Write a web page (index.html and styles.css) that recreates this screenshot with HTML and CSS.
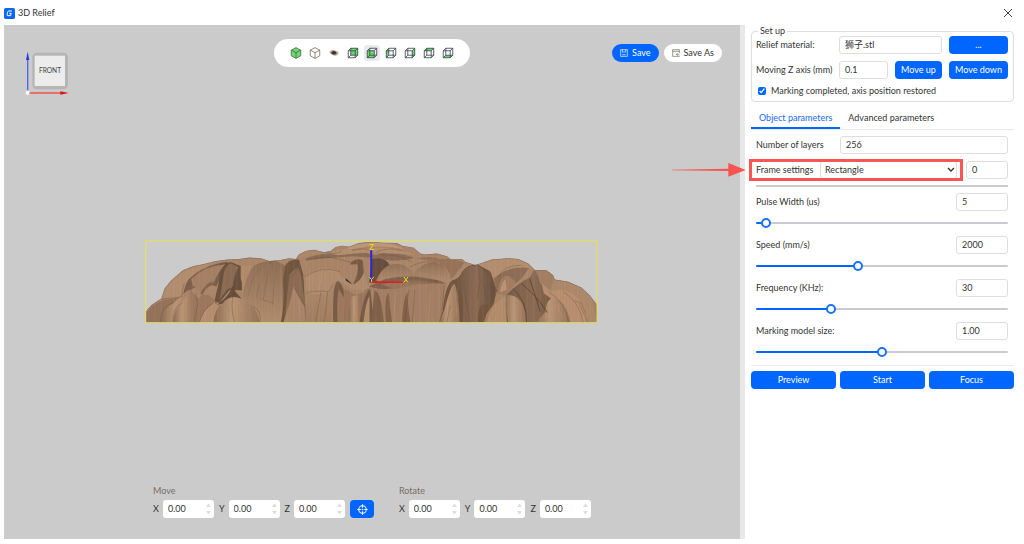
FILE: index.html
```html
<!DOCTYPE html>
<html lang="en">
<head>
<meta charset="utf-8">
<meta name="viewport" content="width=device-width, initial-scale=1">
<title>3D Relief</title>
<link rel="stylesheet" href="styles.css">
</head>
<body>
<svg class="defs" aria-hidden="true">
  <defs>
    <g id="wire" fill="none" stroke="#3b4251" stroke-width="1.3" stroke-linejoin="round">
      <path d="M2 6H13V17H2ZM6 2H17V13H6ZM2 6L6 2M13 6L17 2M13 17L17 13M2 17L6 13"/>
    </g>
    <g id="steps" fill="#dcdcdc"><path d="M0 4L3 0L6 4ZM0 9L3 13L6 9Z"/></g>
  </defs>
</svg>
<div class="app">
  <header class="titlebar">
    <svg class="logo" viewBox="0 0 33 33" aria-hidden="true"><rect width="33" height="33" rx="5" fill="#0a66f5"/><path d="M24 9H14Q11 9 10.500 13L9.500 20Q9 23 12 23H20L21.500 16H16" fill="none" stroke="#fff" stroke-width="3"/></svg>
    <h1 class="title">3D Relief</h1>
    <button class="close" type="button" aria-label="Close"><svg viewBox="0 0 10 10"><path d="M1 1L9 9M9 1L1 9" stroke="#444" stroke-width="1" fill="none"/></svg></button>
  </header>
  <main class="main">
    <section class="stage" aria-label="Viewport">
      <svg class="viewcube" viewBox="0 0 132 135" aria-label="Front view">
        <rect x="22" y="5" width="107" height="110" rx="14" fill="#b5b5b5"/>
        <rect x="29" y="14" width="91" height="91" fill="#ececec"/>
        <text x="75" y="65" text-anchor="middle" class="cube-text">FRONT</text>
        <path d="M8 118V20" stroke="#4a66e0" stroke-width="4"/><path d="M8 2L13 27H3Z" fill="#263bd0"/>
        <path d="M10 126H112" stroke="#f05050" stroke-width="4"/><path d="M131 126L106 121V131Z" fill="#d81818"/>
        <circle cx="8" cy="125" r="6" fill="#fff"/>
      </svg>
      <div class="toolbar">
        <button type="button" aria-label="Solid"><svg viewBox="0 0 19 19"><path d="M9.500 1L17 5V14L9.500 18L2 14V5Z" fill="#6fd672" stroke="#476b49" stroke-width="1.300"/><path d="M2 5L9.500 9L17 5M9.500 9V18" fill="none" stroke="#476b49" stroke-width="1.300"/></svg></button>
        <button type="button" aria-label="Wireframe"><svg viewBox="0 0 19 19"><path d="M9.500 1L17 5V14L9.500 18L2 14V5ZM2 5L9.500 9L17 5M9.500 9V18" fill="#fff" stroke="#77604f" stroke-width="1.200"/></svg></button>
        <button type="button" aria-label="Relief"><svg viewBox="0 0 19 19"><path d="M2 8Q5 4 10 5L16 8Q18 12 12 14Q6 14 2 8Z" fill="#b5a697"/><path d="M5 9Q8 4 13 8Q14 12 10 12Q6 12 5 9Z" fill="#40352e"/></svg></button>
        <button type="button" aria-label="Back"><svg viewBox="0 0 19 19"><path d="M6 2H17V13H6Z" fill="#65dc69"/><use href="#wire"/></svg></button>
        <button class="active" type="button" aria-label="Front"><svg viewBox="0 0 19 19"><path d="M2 6H13V17H2Z" fill="#65dc69"/><use href="#wire"/></svg></button>
        <button type="button" aria-label="Left"><svg viewBox="0 0 19 19"><path d="M2 6L6 2V13L2 17Z" fill="#65dc69"/><use href="#wire"/></svg></button>
        <button type="button" aria-label="Right"><svg viewBox="0 0 19 19"><path d="M13 6L17 2V13L13 17Z" fill="#65dc69"/><use href="#wire"/></svg></button>
        <button type="button" aria-label="Top"><svg viewBox="0 0 19 19"><path d="M2 6L6 2H17L13 6Z" fill="#65dc69"/><use href="#wire"/></svg></button>
        <button type="button" aria-label="Bottom"><svg viewBox="0 0 19 19"><path d="M2 17L6 13H17L13 17Z" fill="#65dc69"/><use href="#wire"/></svg></button>
      </div>
      <div class="file-actions">
        <button class="pill primary" type="button"><svg viewBox="0 0 24 24" fill="none" stroke="currentColor" stroke-width="2"><path d="M2 2H22V22H2ZM7 2V9H17V2M7 17H17"/></svg>Save</button>
        <button class="pill" type="button"><svg viewBox="0 0 24 24" fill="none" stroke="#6e6259" stroke-width="2"><path d="M22 12V2H2V22H22V20M2 7H22M14 16H22M17 12L13 16L17 20"/></svg>Save As</button>
      </div>
      <svg class="relief" viewBox="16 29 1365 252" role="img" aria-label="Relief model">
        <defs>
          <linearGradient id="base" x1="0" y1="0" x2="0" y2="1"><stop offset="0" stop-color="#a98468"/><stop offset=".55" stop-color="#ac886b"/><stop offset="1" stop-color="#a37e61"/></linearGradient>
          <linearGradient id="lit" x1="0" y1="0" x2="1" y2="0"><stop offset="0" stop-color="#8b6b54"/><stop offset=".4" stop-color="#bb9575"/><stop offset="1" stop-color="#947158"/></linearGradient>
          <linearGradient id="dark" x1="0" y1="0" x2="1" y2="0"><stop offset="0" stop-color="#765a47"/><stop offset=".5" stop-color="#8b6b54"/><stop offset="1" stop-color="#65503f"/></linearGradient>
          <linearGradient id="dome" x1="0" y1="0" x2="0" y2="1"><stop offset="0" stop-color="#8f6f57"/><stop offset="1" stop-color="#b18c6e"/></linearGradient>
          <pattern id="grain" width="19" height="260" patternUnits="userSpaceOnUse"><path d="M2 0L3 260M14 0L12 260" stroke="#6f533f" stroke-opacity=".14" stroke-width="1.500"/><path d="M8 0V260" stroke="#c9a182" stroke-opacity=".18" stroke-width="2"/></pattern>
          <clipPath id="outline"><path id="sil" d="M18 278V245L35 225L65 205L75 175L95 150L130 120L160 108L190 102L230 92L265 88L300 86L330 82L365 84L390 92L420 90L450 84L470 86L480 72L500 62L525 58L555 66L575 62L590 50L610 46L630 49L660 38L700 34L730 37L775 38L790 46L825 52L845 70L860 73L895 70L925 78L938 88L970 86L982 95L1010 104L1030 98L1060 88L1110 84L1140 86L1170 100L1190 119L1225 120L1245 135L1250 148L1290 155L1330 172L1355 195L1377 224V278Z"/></clipPath>
        </defs>
        <g clip-path="url(#outline)">
          <rect x="16" y="29" width="1365" height="252" fill="url(#base)"/>
          <path d="M65 205Q85 160 125 130Q165 103 220 98L155 145L125 235L100 205Z" fill="#b38d6f"/>
          <path d="M126 235Q132 160 150 145Q190 103 265 95L250 130L230 170Q210 155 188 195L170 170L145 185Z" fill="url(#dark)"/>
          <path d="M155 147Q195 107 258 102Q232 130 224 158Q205 150 182 190Q170 170 160 167Z" fill="#a58064"/>
          <path d="M225 215Q238 155 246 120Q255 98 274 95L306 108L308 180L270 180L240 218Z" fill="#68503e"/>
          <path d="M253 130Q260 100 276 100L298 110Q284 130 279 177Q265 165 240 213Z" fill="#8c6a52"/>
          <path d="M304 108L338 106Q322 130 315 178L304 145Z" fill="#b28b6c"/>
          <path d="M310 200Q315 145 345 105Q400 78 440 107L433 278H360Q350 230 310 200Z" fill="url(#dome)"/>
          <path d="M327 196Q335 140 362 115M410 110L400 225M360 205Q380 212 403 220M350 205L360 165M389 115L372 208" fill="none" stroke="#775a45" stroke-width="2" opacity=".45"/>
          <path d="M437 110Q445 86 480 88L493 135L500 278H424Q437 230 432 150Z" fill="#71563f"/>
          <path d="M450 135Q463 118 477 112Q487 132 492 180Q500 220 502 278H434Q445 200 450 135Z" fill="#8b6b52"/>
          <path d="M463 168Q480 203 496 231L500 278H432Q450 230 463 168Z" fill="#aa8468"/>
          <path d="M470 86Q500 48 552 67L545 77Q500 80 470 86Z" fill="#ac876b"/>
          <path d="M493 139Q500 88 555 83Q620 68 704 92L700 278H590L583 200L560 180L500 190Z" fill="#a98468"/>
          <path d="M497 140Q540 107 590 116L623 155L643 158Q663 145 670 118L690 172L675 180L640 178L610 157L590 153L570 190L505 193Z" fill="#b18b6e"/>
          <path d="M500 84Q550 66 590 72Q650 55 710 75L735 66Q770 64 826 82Q800 93 750 90L690 82L640 78Q570 83 500 90Z" fill="#8a6b55"/>
          <path d="M575 71Q600 49 650 62Q720 42 790 62L830 72L750 70Q700 64 650 70L600 75Z" fill="#b48e71"/>
          <path d="M620 58Q640 39 700 37Q758 34 797 56L750 50L690 48L650 55Z" fill="#bd9778"/>
          <path d="M640 94Q656 82 672 91L675 126Q667 153 642 163Q660 130 656 102L632 103Z" fill="#765b47"/>
          <path d="M620 144L635 157L640 163L621 151Z" fill="#2d2a2a"/>
          <path d="M700 85Q745 78 755 110Q725 115 717 157H690Z" fill="#674d3c"/>
          <path d="M712 151Q728 108 770 101Q808 108 822 130L790 143L720 155Z" fill="#a88268"/>
          <path d="M737 113Q760 95 795 105Q815 114 824 131Q860 83 912 103Q927 120 932 153L835 138Q770 130 716 153Z" fill="url(#dome)"/>
          <path d="M832 85Q870 75 910 87Q950 84 978 97L967 112L938 148Q931 110 895 95Z" fill="#987359"/>
          <path d="M703 170Q740 137 835 135Q887 144 923 157L914 243L908 278H702Z" fill="#a47f64"/>
          <path d="M690 170Q745 133 832 140Q900 148 921 160Q850 156 800 167Q752 180 720 176Z" fill="#7f624e"/>
          <path d="M728 163Q785 145 885 154Q820 163 770 177Z" fill="#98755c"/>
          <path d="M912 245Q919 170 940 151Q965 144 970 125Q990 101 1017 103L1055 123L1076 180L1065 223L1025 278H900Z" fill="#71563f"/>
          <path d="M918 238Q935 170 947 160Q960 180 964 278H900Z" fill="url(#lit)"/>
          <path d="M965 144Q975 108 1015 105Q1055 125 1068 177L1062 218Q1040 225 1024 245V278H972Q978 200 960 163Z" fill="url(#dark)"/>
          <path d="M1020 103Q1055 85 1110 84Q1158 85 1182 116Q1115 106 1065 146L1055 122Z" fill="#b48e70"/>
          <path d="M1066 145Q1110 105 1172 113L1150 145L1120 170L1104 194L1078 190Z" fill="#8d6d56"/>
          <path d="M1078 190Q1082 143 1103 137Q1120 137 1133 160L1103 193Z" fill="#a27d62"/>
          <path d="M1084 187Q1093 150 1101 148L1105 178Z" fill="#bc9475"/>
          <path d="M1104 195Q1135 161 1174 142L1188 118Q1200 130 1205 155Q1218 179 1248 199L1270 210L1265 278H1105Z" fill="url(#dark)"/>
          <path d="M1190 119Q1240 112 1248 147L1237 180L1211 160Z" fill="#a37e63"/>
          <path d="M1210 160L1236 183L1268 178Q1303 182 1325 210L1342 240L1350 278H1280Q1260 215 1217 190Z" fill="#b88f70"/>
          <path d="M1250 150Q1310 145 1360 204L1378 278H1347Q1341 235 1320 205Q1295 175 1270 174Z" fill="#ad886b"/>
          <path d="M1222 245Q1224 205 1246 205Q1280 205 1298 278H1192Z" fill="url(#lit)"/>
          <path d="M1098 209L1105 195Q1160 193 1164 278H1110Z" fill="url(#lit)"/>
          <path d="M1045 278Q1062 210 1103 200Q1098 244 1106 278Z" fill="#b38c6d"/>
          <path d="M1018 278Q1018 224 1035 223Q1050 222 1050 232L1036 278Z" fill="#735640"/>
          <path d="M1125 176Q1167 215 1165 278M1174 145L1206 244M1148 160Q1195 195 1227 247" fill="none" stroke="#5f4836" stroke-width="3"/>
          <path d="M20 247Q45 211 100 205L126 200L117 278H18Z" fill="#95725a"/>
          <path d="M62 278Q66 235 103 218Q130 190 148 178Q167 190 173 224L160 278Z" fill="url(#lit)"/>
          <path d="M100 278Q104 232 130 214Q145 180 155 183L168 240L162 278Z" fill="url(#lit)"/>
          <path d="M155 180Q179 219 187 193Q220 190 233 225L215 278H164Z" fill="#9b775d"/>
          <path d="M180 278Q188 242 223 218L236 225L227 278Z" fill="#b68e6f"/>
          <path d="M222 278Q225 232 252 220Q275 185 284 183Q315 208 337 226Q355 243 361 278Z" fill="url(#lit)"/>
          <path d="M233 224Q270 198 276 173Q282 160 286 182L307 206Q271 190 250 220Z" fill="#654d3b"/>
          <path d="M583 278Q579 160 597 152Q611 160 622 205L616 278Z" fill="#785c47"/>
          <path d="M596 278Q593 193 601 177L616 205L615 278Z" fill="#9e795e"/>
          <path d="M614 177Q630 179 645 194L673 188L690 173L699 278H617Z" fill="#9a765d"/>
          <path d="M631 278Q628 222 639 200L657 193L666 278Z" fill="url(#lit)"/>
          <path d="M662 278Q671 201 694 174L705 278Z" fill="#765944"/>
          <path d="M674 278Q680 215 692 198V278Z" fill="#b68e6f"/>
          <path d="M708 180Q728 190 735 278H696Z" fill="#806049"/>
          <path d="M742 278Q735 204 750 187Q752 230 760 278ZM790 278Q794 200 806 187Q807 233 815 278Z" fill="#836149"/>
          <rect x="16" y="29" width="1365" height="252" fill="url(#grain)"/>
          <g fill="none" stroke="#644c3a" stroke-width="2" opacity=".5">
            <path d="M66 207Q105 203 126 200L133 160M103 217Q60 230 63 278M129 218Q97 232 101 278M180 278Q186 241 220 220M168 190L175 220L164 278M225 155Q205 150 187 190M285 184Q270 223 286 278M340 228Q370 244 361 278M432 110V278M414 95Q402 88 389 99M458 142Q474 118 479 112M465 173L500 230M500 190Q520 179 569 185L583 160M545 188L530 278M566 185L556 278M500 90Q560 75 592 85L640 97M497 140Q550 105 603 124M562 66Q588 75 608 62M640 60Q675 49 705 65"/>
            <path d="M710 66Q750 49 790 61M728 75Q775 70 815 92M813 111Q855 87 894 98M725 156Q790 160 900 151M810 180L799 278M828 179L821 278M917 165L907 278M935 225L925 278M956 205Q966 230 965 278M976 129L977 178L995 278M1020 113L1025 156L1016 205M1036 111Q1030 154 1043 207M1057 126Q1071 172 1067 220M1081 140Q1093 105 1150 105M1230 184Q1285 218 1291 278M1275 185Q1325 214 1335 278M1310 212L1330 220L1342 250M1325 223L1349 278"/>
          </g>
          <g stroke="#d0a98a" stroke-width="2" fill="none" opacity=".35"><path d="M258 235L266 278M298 214L310 250M143 205L135 245M202 238L195 265M477 205L482 255M645 208L649 260M770 187L764 278M876 182L869 278M950 187L955 257M1125 217L1133 269M1259 225L1273 269M510 110L512 180M550 120L540 179"/></g>
          <use href="#sil" fill="none" stroke="#75604f" stroke-width="2"/>
        </g>
        <rect x="18" y="32" width="1359" height="246" fill="none" stroke="#e9e34b" stroke-width="3"/>
        <path d="M697 156V58" stroke="#3027d0" stroke-width="6"/><path d="M697 156H792" stroke="#dc211e" stroke-width="5"/>
        <path d="M692 43H704L693 58H705M691 140L698 148L705 140M698 148V156M795 140L808 157M808 140L795 157" fill="none" stroke="#e5dc2d" stroke-width="3"/>
      </svg>
      <div class="transforms">
        <fieldset class="transform"><legend>Move</legend>
          <div class="axes">
            <label class="axis">X<span class="spin"><input type="text" value="0.00"><svg viewBox="0 0 6 13"><use href="#steps"/></svg></span></label>
            <label class="axis">Y<span class="spin"><input type="text" value="0.00"><svg viewBox="0 0 6 13"><use href="#steps"/></svg></span></label>
            <label class="axis">Z<span class="spin"><input type="text" value="0.00"><svg viewBox="0 0 6 13"><use href="#steps"/></svg></span></label>
            <button class="btn center" type="button" aria-label="Center model"><svg viewBox="0 0 32 32" fill="none" stroke="#fff" stroke-width="3"><circle cx="16" cy="16" r="11"/><path d="M16 1V11M16 21V31M1 16H11M21 16H31"/><circle cx="16" cy="16" r="1"/></svg></button>
          </div>
        </fieldset>
        <fieldset class="transform"><legend>Rotate</legend>
          <div class="axes">
            <label class="axis">X<span class="spin"><input type="text" value="0.00"><svg viewBox="0 0 6 13"><use href="#steps"/></svg></span></label>
            <label class="axis">Y<span class="spin"><input type="text" value="0.00"><svg viewBox="0 0 6 13"><use href="#steps"/></svg></span></label>
            <label class="axis">Z<span class="spin"><input type="text" value="0.00"><svg viewBox="0 0 6 13"><use href="#steps"/></svg></span></label>
          </div>
        </fieldset>
      </div>
    </section>
    <aside class="side">
      <fieldset class="setup">
        <legend>Set up</legend>
        <div class="setup-grid">
          <label for="material">Relief material:</label>
          <input class="field wide" id="material" type="text" value="狮子.stl">
          <button class="btn" type="button">...</button>
          <label for="zaxis">Moving Z axis (mm)</label>
          <input class="field" id="zaxis" type="text" value="0.1">
          <button class="btn" type="button">Move up</button>
          <button class="btn" type="button">Move down</button>
        </div>
        <label class="check"><input type="checkbox" checked>Marking completed, axis position restored</label>
      </fieldset>
      <div class="tabs" role="tablist">
        <button class="tab selected" type="button" role="tab" aria-selected="true">Object parameters</button>
        <button class="tab" type="button" role="tab" aria-selected="false">Advanced parameters</button>
      </div>
      <div class="params">
        <div class="row layers"><label for="layers">Number of layers</label><input class="field" id="layers" type="text" value="256"></div>
        <div class="row frame">
          <label for="frame">Frame settings</label>
          <span class="select-box"><select class="field" id="frame"><option>Rectangle</option></select><svg viewBox="0 0 10 10"><path d="M2 3L5 6L8 3" fill="none" stroke="#333" stroke-width="1.400"/></svg></span>
          <input class="field" type="text" value="0" aria-label="Frame value">
          <span class="highlight"></span>
          <svg class="arrow" viewBox="0 0 220 42" aria-hidden="true"><path d="M0 20L168 17V0L220 21L168 41V24L0 22Z" fill="#f85252"/></svg>
        </div>
        <hr>
        <div class="row"><label for="pulse">Pulse Width (us)</label><input class="field" type="text" value="5" aria-label="Pulse width value"></div>
        <input class="slider" id="pulse" type="range" value="2" style="--value:2%">
        <div class="row"><label for="speed">Speed (mm/s)</label><input class="field" type="text" value="2000" aria-label="Speed value"></div>
        <input class="slider" id="speed" type="range" value="40" style="--value:40%">
        <div class="row"><label for="freq">Frequency (KHz):</label><input class="field" type="text" value="30" aria-label="Frequency value"></div>
        <input class="slider" id="freq" type="range" value="29" style="--value:29%">
        <div class="row"><label for="size">Marking model size:</label><input class="field" type="text" value="1.00" aria-label="Model size value"></div>
        <input class="slider" id="size" type="range" value="50" style="--value:50%">
      </div>
      <div class="actions">
        <button class="btn" type="button">Preview</button>
        <button class="btn" type="button">Start</button>
        <button class="btn" type="button">Focus</button>
      </div>
    </aside>
  </main>
</div>
</body>
</html>
```
FILE: styles.css
```css
* { box-sizing: border-box; }
body {
  margin: 0;
  background: #fff;
  color: #333;
  font: 9px/12px Lato, "Noto Sans CJK SC", sans-serif;
}
button, input, select { font: inherit; color: inherit; margin: 0; }
button { border: 0; padding: 0; background: none; }
fieldset { border: 0; margin: 0; padding: 0; min-width: 0; }
.defs { position: absolute; width: 0; height: 0; }
.app { min-height: 100vh; display: flex; flex-direction: column; padding: 0 0 5px 4px; }

.titlebar { display: flex; align-items: center; gap: 3px; height: 25px; padding: 1px 11px 0 0; }
.logo { width: 11px; height: 11px; }
.title { margin: 0; font-size: 9px; font-weight: 400; flex: 1; }
.close { width: 10px; height: 10px; }
.close svg { display: block; }

.main { flex: 1; display: flex; }
.stage {
  position: relative;
  flex: 1;
  display: flex;
  flex-direction: column;
  align-items: center;
  padding: 14px 0 21px;
  background: #cbcbcb;
}
.viewcube { position: absolute; left: 21px; top: 26px; width: 44px; height: 45px; }
.cube-text { font: 20px Lato, sans-serif; fill: #444; }
.toolbar { display: flex; align-items: center; gap: 3px; height: 28px; padding: 0 14px; border-radius: 14px; background: #fff; }
.toolbar button { width: 16px; height: 16px; padding: 2px; border-radius: 3px; }
.toolbar svg { display: block; width: 12px; height: 12px; }
.toolbar .active { background: #e8eaee; }
.file-actions { position: absolute; top: 19px; right: 18px; display: flex; gap: 5px; }
.pill { display: flex; align-items: center; gap: 4px; height: 18px; padding: 0 8px; border-radius: 9px; background: #fff; }
.pill svg { width: 8px; height: 8px; }
.primary { background: #0066ff; color: #fff; }
.relief { width: 61.6%; margin: auto; padding-top: 11px; }

.transforms { display: flex; gap: 25px; }
.transform legend { padding: 0; margin-bottom: 3px; color: #796e66; }
.axes { display: flex; gap: 5px; }
.axis { display: flex; align-items: center; gap: 4px; }
.spin { display: flex; align-items: center; width: 51px; height: 18px; padding: 0 3px 0 5px; border-radius: 3px; background: #fff; }
.spin input { flex: 1; min-width: 0; border: 0; padding: 0; background: none; }
.spin svg { width: 5px; height: 12px; }
.center { width: 24px; }
.center svg { display: block; width: 11px; height: 11px; margin: auto; }

.side { flex: none; width: 284px; padding: 0 10px 0 6px; border-left: 5px solid #e8e8e8; }
.field { height: 18px; min-width: 0; width: 100%; padding: 0 5px 1px; border: 1px solid #dedede; border-radius: 3px; background: #fff; }
.btn { height: 18px; border-radius: 4px; background: #0066ff; color: #fff; }
.setup { margin-top: 1px; padding: 0 5px 4px 4px; border: 1px solid #dedede; border-radius: 4px; }
.setup legend { margin-left: 2px; padding: 0 2px; line-height: 10px; }
.setup-grid { display: grid; grid-template-columns: 76px 1fr 47px 59px; gap: 7px; align-items: center; }
.setup-grid label { white-space: nowrap; }
.wide { grid-column: span 2; }
.check { display: flex; align-items: center; gap: 5px; margin-top: 6px; padding-left: 2px; }
.check input { width: 8px; height: 8px; accent-color: #0066ff; }
.tabs { display: flex; margin-top: 7px; border-bottom: 1px solid #e8e8e8; }
.tab { height: 20px; padding: 0 8px; border-bottom: 2px solid transparent; }
.selected { color: #1769f5; border-color: #0066ff; }
.params { padding: 6px 6px 0 5px; border-bottom: 1px solid #ececec; }
.row { display: grid; grid-template-columns: 1fr 52px; align-items: center; }
.layers { grid-template-columns: 1fr 168px; }
.frame { position: relative; grid-template-columns: 64px 1fr 42px; margin-top: 7px; }
.frame > .field { grid-column: 3; }
.select-box { position: relative; margin-right: 9px; }
.select-box select { display: block; appearance: none; padding: 0 4px; }
.select-box svg { position: absolute; right: 1px; top: 4px; width: 10px; height: 10px; }
.highlight { position: absolute; left: -7px; right: 45px; top: -2px; bottom: -2px; border: 3px solid #f85555; pointer-events: none; }
.arrow { position: absolute; right: calc(100% + 10px); top: 2px; width: 74px; height: 14px; }
hr { height: 2px; margin: 6px 0; border: 0; background: #ccc; }
.slider { display: block; appearance: none; width: 100%; height: 10px; margin: 7px 0 8px; background: none; }
.slider::-webkit-slider-runnable-track { height: 2px; border-radius: 1px; background: linear-gradient(to right, #0066ff var(--value), #c9cbd0 var(--value)); }
.slider::-webkit-slider-thumb { appearance: none; width: 10px; height: 10px; margin-top: -4px; border: 2px solid #1b70f5; border-radius: 50%; background: #fff; }
.actions { display: grid; grid-template-columns: repeat(3, 1fr); gap: 4px; margin-top: 5px; }
```
